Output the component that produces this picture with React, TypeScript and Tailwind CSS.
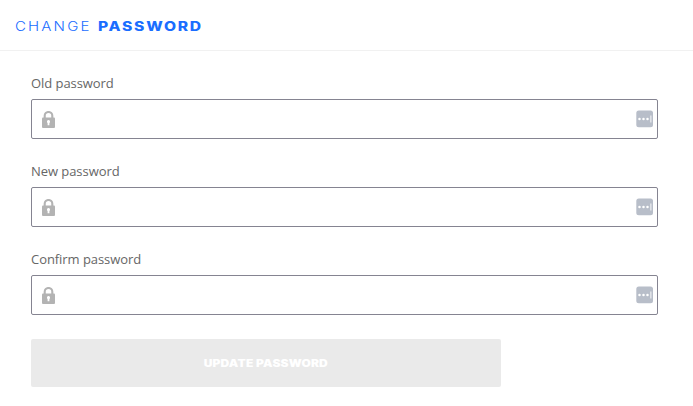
import { useState } from "react";

const LockIcon = () => (
  <svg className="h-[17px] w-[13px] shrink-0" viewBox="0 0 13 17" fill="none">
    <path d="M2.7 8V4.8a3.8 3.8 0 0 1 7.6 0V8" stroke="#b3b3b3" strokeWidth="2.1" />
    <rect y="6.6" width="13" height="10.4" rx="1" fill="#b3b3b3" />
    <path d="M6.5 9a1.6 1.6 0 0 1 .9 2.9V14.3H5.6V11.9a1.6 1.6 0 0 1 .9-2.9z" fill="#fff" />
  </svg>
);

const ManagerIcon = () => (
  <svg className="h-[18px] w-[17px] shrink-0" viewBox="0 0 17 18">
    <rect x="0.3" y="0.5" width="16.7" height="16.7" rx="2.5" fill="#b8bec9" />
    <circle cx="3.5" cy="9" r="1.25" fill="#fff" />
    <circle cx="7.5" cy="9" r="1.25" fill="#fff" />
    <circle cx="11.5" cy="9" r="1.25" fill="#fff" />
    <rect x="14" y="5.5" width="1.6" height="7" fill="#dfe2e7" />
  </svg>
);

interface PasswordFieldProps {
  id: string;
  label: string;
}

const PasswordField = ({ id, label }: PasswordFieldProps) => {
  const [value, setValue] = useState("");

  return (
    <div className="mb-6">
      <label htmlFor={id} className="block h-6 text-[13px] leading-4 tracking-[-0.06px] text-[#666]">
        {label}
      </label>
      <div className="flex h-10 items-center rounded-[2px] border border-[#858491] pl-2.5 pr-1">
        <LockIcon />
        <input
          id={id}
          type="password"
          value={value}
          onChange={(e) => setValue(e.target.value)}
          className="h-full min-w-0 flex-1 bg-transparent px-3 text-sm outline-none"
        />
        <ManagerIcon />
      </div>
    </div>
  );
};

export default function App() {
  return (
    <div className="min-h-screen bg-white font-['Open_Sans',sans-serif]">
      {/* Header */}
      <header className="flex h-[51px] items-center border-b border-[#f1f1f1] pl-[15px] pt-1">
        <h1 className="flex font-['Inter',sans-serif] text-[12.5px] leading-4 text-[#1a6dff]">
          <span className="w-[83px]">
            <span className="inline-block origin-left scale-x-[1.2] font-light tracking-[1.8px]">CHANGE</span>
          </span>
          <span className="inline-block origin-left scale-x-[1.25] font-extrabold tracking-[1.4px]">PASSWORD</span>
        </h1>
      </header>

      {/* Form */}
      <form className="pl-[31px] pr-[35px] pt-6" onSubmit={(e) => e.preventDefault()}>
        <PasswordField id="old-password" label="Old password" />
        <PasswordField id="new-password" label="New password" />
        <PasswordField id="confirm-password" label="Confirm password" />
        <button
          type="submit"
          disabled
          className="flex h-12 w-[470px] items-center justify-center rounded-[2px] bg-[#eaeaea] font-['Inter',sans-serif] text-[10px] font-black text-white"
        >
          <span className="inline-block scale-x-[1.2] whitespace-nowrap tracking-[0.16px]">UPDATE PASSWORD</span>
        </button>
      </form>
    </div>
  );
}
